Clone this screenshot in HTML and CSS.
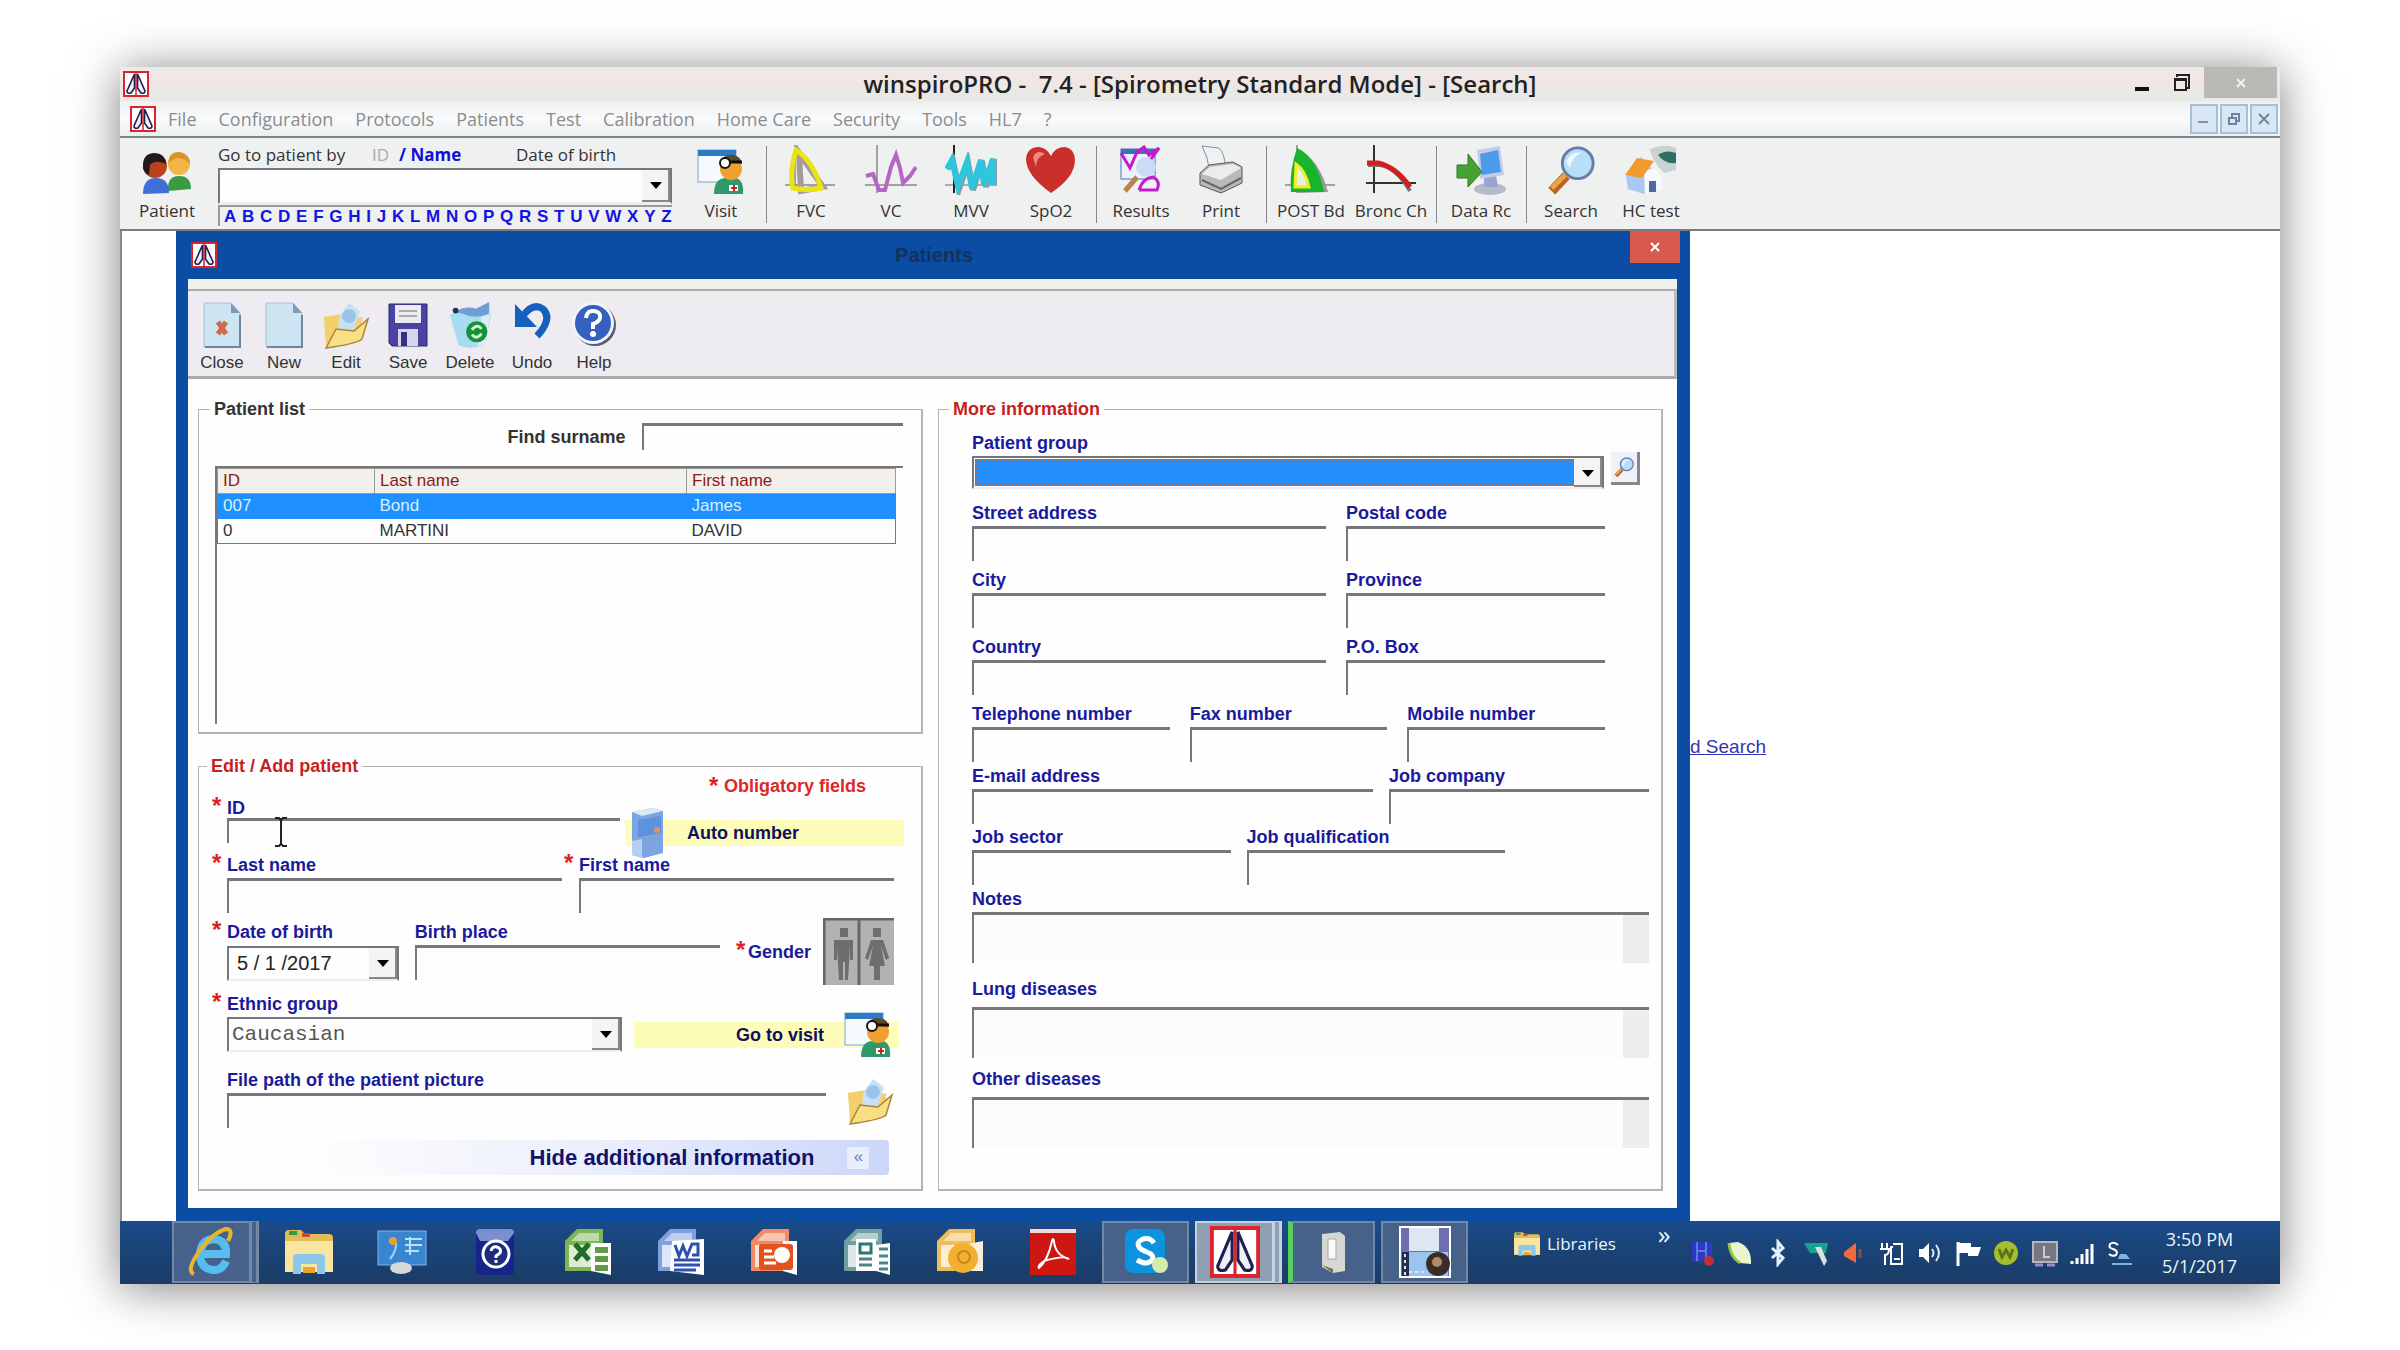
FILE: index.html
```html
<!DOCTYPE html>
<html lang="en">
<head>
    <meta charset="UTF-8">
    <meta name="viewport" content="width=device-width, initial-scale=1.0">
    <title>winspiroPRO - Search</title>
    <link rel="stylesheet" href="styles.css">
</head>
<body>
    <!-- shared icons -->
    <svg class="defs" aria-hidden="true">
        <symbol id="lungs" viewBox="0 0 26 26" preserveAspectRatio="none">
            <rect x="1" y="1" width="24" height="24" fill="#fff" stroke="#dc2430" stroke-width="2"/>
            <path d="M11.500 3 L4 20 Q4 23 8 22 L11.500 17 Z M14.500 3 L22 20 Q22 23 18 22 L14.500 17 Z" fill="#eef0f8" stroke="#1d2050" stroke-width="1.600"/>
            <path d="M13 2 V24" stroke="#dc2430" stroke-width="1.600"/>
        </symbol>
        <symbol id="visit" viewBox="0 0 48 46">
            <rect x="1" y="1" width="38" height="32" fill="#f6fafe" stroke="#7aa6cc"/>
            <rect x="1" y="1" width="38" height="6" fill="#2b7cc4"/>
            <path d="M17 45 Q17 29 29 29 L39 29 Q47 31 46 45 Z" fill="#2f9a68"/>
            <circle cx="34" cy="20" r="11" fill="#f0a030"/>
            <path d="M23 13 Q26 5 36 6 Q44 7 45 15 L36 13 Z" fill="#5b4a2c"/>
            <circle cx="28" cy="14" r="5" fill="#fff" stroke="#111" stroke-width="2"/>
            <path d="M33 13 H45" stroke="#111" stroke-width="3"/>
            <rect x="32" y="36" width="9" height="6" fill="#fff"/><path d="M34 39 h6 M37 36 v6" stroke="#c22" stroke-width="2"/>
        </symbol>
        <symbol id="folder" viewBox="0 0 48 48">
            <path d="M2 16 L20 13 L24 19 L40 16 L40 40 L4 47 Z" fill="#f3d06c"/>
            <path d="M17 16 L27 2 L38 10 L30 34 L16 34 Z" fill="#c7e0f5"/>
            <circle cx="27" cy="15" r="7" fill="#9cc4ea"/>
            <path d="M4 47 L14 28 L32 30 L46 18 L40 38 Q34 43 4 47 Z" fill="#f8df84" stroke="#a98538" stroke-width="1.500"/>
        </symbol>
        <symbol id="magnifier" viewBox="0 0 50 52">
            <path d="M20 32 L5 48" stroke="#b9641d" stroke-width="10"/>
            <path d="M19 31 L5 45" stroke="#f0a24a" stroke-width="5"/>
            <circle cx="32" cy="19" r="16" fill="#b9defa" stroke="#667ba8" stroke-width="3"/>
            <path d="M20 18 Q24 6 36 8 Q26 12 24 24 Z" fill="#eaf7ff"/>
        </symbol>
        <symbol id="explorer" viewBox="0 0 52 48">
            <path d="M2 6 Q2 2 6 2 H18 L22 6 H46 Q50 6 50 10 V44 H2 Z" fill="#e2bd55"/>
            <path d="M2 13 H50 V44 H2 Z" fill="#f8e5a0"/>
            <rect x="6" y="3" width="8" height="4" fill="#2f9c4c"/><rect x="19" y="5" width="8" height="4" fill="#d0483a"/>
            <path d="M10 46 V30 Q10 26 14 26 H38 Q42 26 42 30 V46 H34 V36 H18 V46 Z" fill="#8dc8ea"/>
            <rect x="20" y="39" width="12" height="6" fill="#e8a72c"/>
        </symbol>
        <symbol id="office-page" viewBox="0 0 50 50">
            <path d="M14 2 H40 L40 44 H2 V14 Z" fill="currentColor"/>
            <path d="M16 6 H36 V14 H8 Z" fill="#ffffff" opacity=".5"/>
            <path d="M6 18 H30 V40 H6 Z" fill="#ffffff" opacity=".75"/>
        </symbol>
    </svg>

    <div class="screen">
        <header class="titlebar">
            <svg class="app-icon"><use href="#lungs"/></svg>
            <h1>winspiroPRO -  7.4 - [Spirometry Standard Mode] - [Search]</h1>
            <div class="window-controls">
                <button aria-label="Minimize"><svg width="14" height="20"><rect y="14" width="14" height="4" fill="#111"/></svg></button>
                <button aria-label="Restore"><svg width="18" height="20" fill="none" stroke="#222" stroke-width="2"><path d="M4 4 V2 H16 V15 H14"/><path d="M2 6 H13 V17 H2 Z M2 7 H13"/></svg></button>
                <button class="close" aria-label="Close"><svg width="12" height="12" stroke="#f4f0ee" stroke-width="2"><path d="M2 2 L10 10 M10 2 L2 10"/></svg></button>
            </div>
        </header>

        <nav class="menubar">
            <svg class="app-icon"><use href="#lungs"/></svg>
            <a href="#">File</a>
            <a href="#">Configuration</a>
            <a href="#">Protocols</a>
            <a href="#">Patients</a>
            <a href="#">Test</a>
            <a href="#">Calibration</a>
            <a href="#">Home Care</a>
            <a href="#">Security</a>
            <a href="#">Tools</a>
            <a href="#">HL7</a>
            <a href="#">?</a>
            <div class="mdi-controls">
                <button aria-label="Minimize child"><svg width="12" height="12"><rect y="8" width="10" height="2" fill="#7c94ae"/></svg></button>
                <button aria-label="Restore child"><svg width="12" height="12" fill="none" stroke="#6c86a4" stroke-width="2"><path d="M4 4 V1 H11 V8 H8 M1 5 H8 V11 H1 Z"/></svg></button>
                <button aria-label="Close child"><svg width="12" height="12" stroke="#6c86a4" stroke-width="2"><path d="M1 1 L11 11 M11 1 L1 11"/></svg></button>
            </div>
        </nav>

        <div class="toolbar">
            <button class="tool patient">
                <svg width="50" height="46" viewBox="0 0 50 46">
                    <path d="M26 42 Q25 27 37 27 Q49 27 49 40 Z" fill="#3b9a45"/>
                    <circle cx="37" cy="15" r="11" fill="#f2b548"/><path d="M26 14 Q27 2 38 3 Q48 5 48 15 Q42 8 34 9 Z" fill="#dc9428"/>
                    <path d="M1 45 Q1 29 14 29 Q27 29 27 44 Z" fill="#3f6fd6"/>
                    <circle cx="13" cy="17" r="12" fill="#b8441e"/><path d="M1 19 Q0 4 13 4 Q24 5 24 15 Q14 10 8 16 L7 26 Q2 24 1 19 Z" fill="#241a1c"/>
                </svg>
                <span>Patient</span>
            </button>
            <div class="goto">
                <div class="goto-labels">
                    <label for="gotoPatient">Go to patient by</label>
                    <span class="muted">ID</span>
                    <a href="#">/ Name</a>
                    <span>Date of birth</span>
                </div>
                <div class="combo">
                    <input id="gotoPatient" type="text">
                </div>
                <div class="letters">
                    <a href="#">A</a><a href="#">B</a><a href="#">C</a><a href="#">D</a><a href="#">E</a><a href="#">F</a><a href="#">G</a><a href="#">H</a><a href="#">I</a><a href="#">J</a><a href="#">K</a><a href="#">L</a><a href="#">M</a><a href="#">N</a><a href="#">O</a><a href="#">P</a><a href="#">Q</a><a href="#">R</a><a href="#">S</a><a href="#">T</a><a href="#">U</a><a href="#">V</a><a href="#">W</a><a href="#">X</a><a href="#">Y</a><a href="#">Z</a>
                </div>
            </div>
            <div class="tool-group">
                <button class="tool"><svg width="48" height="46"><use href="#visit"/></svg><span>Visit</span></button>
            </div>
            <div class="tool-group">
                <button class="tool">
                    <svg width="52" height="50" viewBox="0 0 52 50" fill="none"><path d="M10 0 V46 M0 40 H50" stroke="#555"/><path d="M14 8 L38 42 L16 46 Z" stroke="#a89a9a" stroke-width="6"/><path d="M11 5 Q28 16 36 43 Q20 46 8 43 Q4 30 11 5 Z" stroke="#e9e414" stroke-width="5"/></svg>
                    <span>FVC</span>
                </button>
                <button class="tool">
                    <svg width="52" height="50" viewBox="0 0 52 50" fill="none"><path d="M12 0 V48 M0 40 H52" stroke="#555"/><path d="M1 31 L8 29 L14 45 L20 45 L26 22 L31 10 L35 23 L38 38 L45 31 L51 22" stroke="#b566c4" stroke-width="4"/></svg>
                    <span>VC</span>
                </button>
                <button class="tool">
                    <svg width="52" height="50" viewBox="0 0 52 50" fill="none"><path d="M0 40 H52" stroke="#666"/><path d="M9 0 V48" stroke="#222" stroke-width="2"/><path d="M2 24 L8 16 L14 44 L23 18 L28 45 L37 16 L41 42 L49 14 V40" stroke="#909aa0" stroke-width="6"/><path d="M2 24 L7 15 L13 41 L22 17 L27 43 L36 15 L39 40 L48 14 V40" stroke="#2cc6de" stroke-width="6"/></svg>
                    <span>MVV</span>
                </button>
                <button class="tool">
                    <svg width="52" height="50" viewBox="0 0 52 50"><path d="M26 48 Q1 30 1 14 Q2 2 14 2 Q22 3 26 11 Q30 2 40 2 Q50 4 50 15 Q50 32 26 48 Z" fill="#cb2f2b"/><path d="M8 12 Q12 4 20 9 Q11 12 11 22 Z" fill="#ef8a82"/></svg>
                    <span>SpO2</span>
                </button>
            </div>
            <div class="tool-group">
                <button class="tool">
                    <svg width="44" height="50" viewBox="0 0 44 50" fill="none"><rect x="2" y="4" width="34" height="30" fill="#eaf2fc" stroke="#4d6fb0"/><rect x="2" y="4" width="34" height="5" fill="#3f6fc0"/><circle cx="27" cy="22" r="10" fill="#c9dcf6"/><path d="M18 32 L6 46" stroke="#b7854c" stroke-width="5"/><path d="M2 8 L11 23 L18 7 L25 2 L30 10 L40 3 L32 14 M20 45 H38 Q42 36 34 32 Q24 33 20 45" stroke="#c717cf" stroke-width="3"/></svg>
                    <span>Results</span>
                </button>
                <button class="tool">
                    <svg width="48" height="50" viewBox="0 0 48 50"><path d="M5 1 L22 3 Q28 9 28 21 L12 23 Q11 12 5 1 Z" fill="#eef2f7" stroke="#8a8f96"/><path d="M3 28 L12 20 L36 17 L45 22 V38 L24 48 L3 40 Z" fill="#b9b9b9" stroke="#555"/><path d="M5 29 L24 35 L44 23 L36 19 L13 22 Z" fill="#ececec"/><path d="M5 35 L24 44 L44 33" fill="none" stroke="#666" stroke-width="2"/></svg>
                    <span>Print</span>
                </button>
            </div>
            <div class="tool-group">
                <button class="tool">
                    <svg width="52" height="50" viewBox="0 0 52 50"><path d="M12 0 V48 M0 40 H50" stroke="#555"/><path d="M13 4 Q34 14 43 47 L12 48 Z" fill="#999"/><path d="M12 3 Q32 12 39 47 H6 Q4 26 12 3 Z" fill="#17b52d"/><path d="M11 19 Q20 25 24 42 H10 Z" fill="#e6efe0" stroke="#f0ee22" stroke-width="3"/></svg>
                    <span>POST Bd</span>
                </button>
                <button class="tool">
                    <svg width="50" height="50" viewBox="0 0 50 50" fill="none"><path d="M8 0 V48 M0 38 H50" stroke="#333" stroke-width="2"/><path d="M2 20 H14 Q30 22 44 46" stroke="#777" stroke-width="4"/><path d="M1 18 H12 Q30 22 44 42" stroke="#cf1f20" stroke-width="5"/></svg>
                    <span>Bronc Ch</span>
                </button>
            </div>
            <div class="tool-group">
                <button class="tool">
                    <svg width="50" height="50" viewBox="0 0 50 50"><ellipse cx="34" cy="44" rx="16" ry="6" fill="#b4b9cc"/><path d="M28 30 L40 30 L42 42 L28 42 Z" fill="#9aa6d0"/><path d="M21 5 L44 1 L48 30 L24 34 Z" fill="#c4cce8"/><path d="M24 9 L42 5 L45 27 L26 30 Z" fill="#4c9bea"/><path d="M1 20 H12 V9 L26 27 L12 42 V33 H1 Z" fill="#45a233" stroke="#2d7a25"/></svg>
                    <span>Data Rc</span>
                </button>
            </div>
            <div class="tool-group">
                <button class="tool"><svg width="50" height="50"><use href="#magnifier"/></svg><span>Search</span></button>
                <button class="tool">
                    <svg width="54" height="50" viewBox="0 0 54 50"><path d="M26 4 Q40 -2 52 3 V25 L40 28 Q28 16 26 4 Z" fill="#c9d2d0"/><path d="M34 10 Q42 4 52 8 V18 Q42 20 34 10 Z" fill="#2f6f66"/><path d="M2 32 L17 12 L34 30 V44 L20 49 L4 44 Z" fill="#a9c9f2"/><path d="M20 26 L30 23 L38 32 V45 L21 49 Z" fill="#f5f8fc"/><path d="M1 30 L13 13 L30 16 L18 33 Z" fill="#f29a2e"/><rect x="25" y="36" width="7" height="11" fill="#4b68a8"/></svg>
                    <span>HC test</span>
                </button>
            </div>
        </div>

        <main class="workspace">
            <section class="dialog">
                <div class="dialog-title">
                    <svg class="app-icon"><use href="#lungs"/></svg>
                    <h2>Patients</h2>
                    <button class="dialog-close" aria-label="Close dialog"><svg width="12" height="12" stroke="#fff" stroke-width="2"><path d="M2 2 L10 10 M10 2 L2 10"/></svg></button>
                </div>

                <div class="dialog-body">
                    <div class="dialog-toolbar">
                        <button class="tool"><svg width="38" height="48" viewBox="0 0 38 48"><path d="M1 2 H28 L37 12 V46 H1 Z" fill="#cfe4f3" stroke="#a9c0d2"/><path d="M28 2 V12 H37 Z" fill="#7d9cb8"/><path d="M37 14 V46 H2" fill="none" stroke="#71889b" stroke-width="2"/><path d="M15 21 L23 33 M23 21 L15 33" stroke="#cc6a4a" stroke-width="5"/></svg><span>Close</span></button>
                        <button class="tool"><svg width="38" height="48" viewBox="0 0 38 48"><path d="M1 2 H28 L37 12 V46 H1 Z" fill="#cfe4f3" stroke="#a9c0d2"/><path d="M28 2 V12 H37 Z" fill="#7d9cb8"/><path d="M37 14 V46 H2" fill="none" stroke="#71889b" stroke-width="2"/></svg><span>New</span></button>
                        <button class="tool"><svg width="48" height="48"><use href="#folder"/></svg><span>Edit</span></button>
                        <button class="tool"><svg width="40" height="48" viewBox="0 0 40 48"><path d="M1 3 H39 V45 H4 L1 42 Z" fill="#4b43a4" stroke="#2d2870"/><rect x="7" y="4" width="26" height="18" fill="#eceaf2"/><path d="M11 10 H29 M11 15 H29" stroke="#aaa" stroke-width="2"/><path d="M10 28 H30 V45 H10 Z" fill="#d7d5e8"/><path d="M13 31 H19 V45 H13 Z" fill="#37308a"/></svg><span>Save</span></button>
                        <button class="tool"><svg width="48" height="48" viewBox="0 0 48 50"><path d="M3 14 Q24 6 46 14 L40 46 Q24 52 12 46 Z" fill="#a8dcf0"/><path d="M6 12 Q20 4 30 8 L44 1 V13 Q30 20 16 13 Z" fill="#6d9fd6"/><circle cx="9" cy="10" r="3" fill="#234"/><path d="M36 16 L45 14 L40 46 L32 48 Z" fill="#dcebf0"/><circle cx="31" cy="32" r="11" fill="#16923a"/><path d="M26 30 Q31 23 36 29 M36 34 Q31 41 26 35" fill="none" stroke="#d9f5d4" stroke-width="3"/></svg><span>Delete</span></button>
                        <button class="tool"><svg width="38" height="40" viewBox="0 0 38 40"><path d="M10 15 Q20 1 30 8 Q40 18 24 35" fill="none" stroke="#1660bd" stroke-width="7"/><path d="M2 3 V26 H24 Z" fill="#1660bd"/></svg><span>Undo</span></button>
                        <button class="tool"><svg width="46" height="46" viewBox="0 0 46 46"><circle cx="24" cy="24" r="21" fill="#555a78"/><circle cx="22" cy="22" r="21" fill="#f2f4fb"/><circle cx="22" cy="22" r="18" fill="#3560bd"/><path d="M15 17 Q16 9 23 10 Q30 11 29 17 Q28 21 22 23 V28" fill="none" stroke="#fff" stroke-width="4"/><circle cx="22" cy="33" r="3" fill="#fff"/></svg><span>Help</span></button>
                    </div>

                    <div class="panels">
                        <div class="left-panel">
                            <fieldset class="patient-list">
                                <legend>Patient list</legend>
                                <div class="find">
                                    <label for="findSurname">Find surname</label>
                                    <input id="findSurname" type="text">
                                </div>
                                <div class="listbox">
                                    <table>
                                        <thead>
                                            <tr><th class="col-id">ID</th><th class="col-last">Last name</th><th>First name</th></tr>
                                        </thead>
                                        <tbody>
                                            <tr class="selected"><td>007</td><td>Bond</td><td>James</td></tr>
                                            <tr><td>0</td><td>MARTINI</td><td>DAVID</td></tr>
                                        </tbody>
                                    </table>
                                </div>
                            </fieldset>

                            <fieldset class="edit-patient">
                                <legend class="red">Edit / Add patient</legend>
                                <p class="obligatory"><span class="star">*</span>Obligatory fields</p>
                                <div class="row row-id">
                                    <div class="field starred">
                                        <span class="star">*</span>
                                        <label for="patientId">ID</label>
                                        <input id="patientId" type="text">
                                        <svg class="ibeam" width="14" height="30" fill="none" stroke="#222" stroke-width="2"><path d="M1 1 H5 L7 3 L9 1 H13 M7 3 V27 M1 29 H5 L7 27 L9 29 H13"/></svg>
                                    </div>
                                    <button class="action auto-number">
                                        <svg width="34" height="52" viewBox="0 0 34 52"><path d="M2 5 L22 1 L33 4 V46 L14 51 L2 48 Z" fill="#7ba4e0"/><path d="M2 5 L22 1 L33 4 L12 9 Z" fill="#dbe9f5"/><path d="M8 13 L31 9 V26 L8 30 Z" fill="#5d92de"/><path d="M2 34 L12 32 V51 L2 48 Z" fill="#b8cef0"/><circle cx="27" cy="23" r="3" fill="#dc9468"/></svg>
                                        <span>Auto number</span>
                                    </button>
                                </div>
                                <div class="row row-name">
                                    <div class="field starred">
                                        <span class="star">*</span>
                                        <label for="lastName">Last name</label>
                                        <input id="lastName" type="text">
                                    </div>
                                    <div class="field starred">
                                        <span class="star">*</span>
                                        <label for="firstName">First name</label>
                                        <input id="firstName" type="text">
                                    </div>
                                </div>
                                <div class="row row-birth">
                                    <div class="field starred">
                                        <span class="star">*</span>
                                        <label for="birthDate">Date of birth</label>
                                        <div class="combo"><input id="birthDate" type="text" value="5 / 1 /2017"></div>
                                    </div>
                                    <div class="field">
                                        <label for="birthPlace">Birth place</label>
                                        <input id="birthPlace" type="text">
                                    </div>
                                    <div class="gender">
                                        <span class="star">*</span>
                                        <span class="gender-label">Gender</span>
                                        <button aria-label="Choose gender">
                                            <svg width="71" height="67" viewBox="0 0 71 67"><rect width="71" height="67" fill="#b2b2b2"/><path d="M36 0 V67 M1 67 V1 H71" stroke="#666" stroke-width="3" fill="none"/><g fill="#6e6e6e"><rect x="17" y="10" width="8" height="9"/><path d="M11 22 H30 V42 H27 V28 L25 62 H22 V44 H20 V62 H16 L14 28 V42 H11 Z"/><rect x="50" y="10" width="8" height="9"/><path d="M48 22 H60 L66 40 L63 42 L58 28 L62 48 H57 V62 H51 V48 H46 L50 28 L45 42 L42 40 Z"/></g></svg>
                                        </button>
                                    </div>
                                </div>
                                <div class="row row-ethnic">
                                    <div class="field starred">
                                        <span class="star">*</span>
                                        <label for="ethnic">Ethnic group</label>
                                        <div class="combo">
                                            <select id="ethnic"><option>Caucasian</option></select>
                                        </div>
                                    </div>
                                    <button class="action goto-visit">
                                        <span>Go to visit</span>
                                        <svg width="48" height="46"><use href="#visit"/></svg>
                                    </button>
                                </div>
                                <div class="row row-path">
                                    <div class="field starred">
                                        <label for="picturePath">File path of the patient picture</label>
                                        <input id="picturePath" type="text">
                                    </div>
                                    <button class="browse" aria-label="Browse"><svg width="48" height="50"><use href="#folder"/></svg></button>
                                </div>
                                <button class="hide-info">
                                    <span>Hide additional information</span>
                                    <i>«</i>
                                </button>
                            </fieldset>
                        </div>

                        <fieldset class="more-info">
                            <legend class="red">More information</legend>
                            <div class="row row-group">
                                <div class="field">
                                    <label for="patientGroup">Patient group</label>
                                    <div class="combo highlighted">
                                        <select id="patientGroup"><option></option></select>
                                    </div>
                                </div>
                                <button class="group-search" aria-label="Search group"><svg width="20" height="22"><use href="#magnifier"/></svg></button>
                            </div>
                            <div class="row row-address">
                                <div class="field"><label for="street">Street address</label><input id="street" type="text"></div>
                                <div class="field"><label for="postal">Postal code</label><input id="postal" type="text"></div>
                            </div>
                            <div class="row row-address">
                                <div class="field"><label for="city">City</label><input id="city" type="text"></div>
                                <div class="field"><label for="province">Province</label><input id="province" type="text"></div>
                            </div>
                            <div class="row row-address">
                                <div class="field"><label for="country">Country</label><input id="country" type="text"></div>
                                <div class="field"><label for="pobox">P.O. Box</label><input id="pobox" type="text"></div>
                            </div>
                            <div class="row row-phone">
                                <div class="field"><label for="telephone">Telephone number</label><input id="telephone" type="text"></div>
                                <div class="field"><label for="fax">Fax number</label><input id="fax" type="text"></div>
                                <div class="field"><label for="mobile">Mobile number</label><input id="mobile" type="text"></div>
                            </div>
                            <div class="row row-mail">
                                <div class="field"><label for="email">E-mail address</label><input id="email" type="text"></div>
                                <div class="field"><label for="company">Job company</label><input id="company" type="text"></div>
                            </div>
                            <div class="row row-job">
                                <div class="field"><label for="sector">Job sector</label><input id="sector" type="text"></div>
                                <div class="field"><label for="qualification">Job qualification</label><input id="qualification" type="text"></div>
                            </div>
                            <div class="field memo notes"><label for="notes">Notes</label><textarea id="notes"></textarea></div>
                            <div class="field memo"><label for="lung">Lung diseases</label><textarea id="lung"></textarea></div>
                            <div class="field memo"><label for="other">Other diseases</label><textarea id="other"></textarea></div>
                        </fieldset>
                    </div>
                </div>
            </section>
            <a class="search-link" href="#">d Search</a>
        </main>

        <footer class="taskbar">
            <div class="tasks">
                <button class="task open stacked" aria-label="Internet Explorer"><svg width="48" height="50" viewBox="0 0 48 50" fill="none"><path d="M38 34 Q34 44 24 43 Q12 41 12 27 Q13 13 25 12 Q39 13 38 27 H13" stroke="#55bdf0" stroke-width="8"/><path d="M6 47 Q-2 44 10 26 Q24 6 38 2 Q46 2 40 14" stroke="#eab52c" stroke-width="4"/></svg></button>
                <button class="task" aria-label="File Explorer"><svg width="52" height="48"><use href="#explorer"/></svg></button>
                <button class="task" aria-label="Control Panel"><svg width="50" height="46" viewBox="0 0 50 46"><rect x="1" y="2" width="48" height="34" fill="#3886cf" stroke="#7cb6ea"/><path d="M12 12 Q20 8 19 17 Q18 24 13 30" fill="none" stroke="#9bd0fa" stroke-width="2"/><circle cx="16" cy="12" r="4" fill="#ef9a37"/><path d="M28 10 H45 M28 16 H45 M28 22 H42 M33 8 V26" stroke="#bde0fb" stroke-width="2"/><ellipse cx="24" cy="39" rx="11" ry="6" fill="#d6d8da"/></svg></button>
                <button class="task" aria-label="Help"><svg width="42" height="50" viewBox="0 0 42 50"><rect x="2" y="2" width="38" height="46" rx="4" fill="#16258a"/><path d="M2 6 Q2 2 6 2 H36 Q40 2 40 6 L34 14 H6 Z" fill="#7b8ed2"/><circle cx="22" cy="27" r="13" fill="#1d2b80" stroke="#fff" stroke-width="3"/><path d="M17 24 Q18 19 23 20 Q28 22 26 26 L22 29 V31 M22 33 V36" fill="none" stroke="#fff" stroke-width="3"/></svg></button>
                <button class="task" aria-label="Excel"><svg width="50" height="50" viewBox="0 0 50 50"><g color="#7cb554"><use href="#office-page"/></g><path d="M28 16 H48 V48 L28 44 Z" fill="#fff"/><path d="M32 20 H45 V26 H32 Z M32 29 H45 V35 H32 Z M32 38 H45 V44 H32 Z" fill="#5f9c4a"/><path d="M12 17 L26 33 M26 17 L12 33" stroke="#1f6d2b" stroke-width="5"/></svg></button>
                <button class="task" aria-label="Word"><svg width="50" height="50" viewBox="0 0 50 50"><g color="#7f9fe0"><use href="#office-page"/></g><path d="M16 14 L48 12 V48 L14 44 Z" fill="#fff"/><path d="M19 18 L23 29 L27 19 L31 29 L36 17 H42 V28 H36" fill="none" stroke="#2d4fb0" stroke-width="3"/><path d="M18 33 H44 M18 38 H44 M18 43 H40" stroke="#2d4fb0" stroke-width="3"/></svg></button>
                <button class="task" aria-label="PowerPoint"><svg width="50" height="50" viewBox="0 0 50 50"><g color="#f08b66"><use href="#office-page"/></g><path d="M34 14 H48 V48 L34 44 Z" fill="#fff"/><rect x="10" y="17" width="34" height="26" rx="3" fill="#e2521f"/><circle cx="33" cy="28" r="8" fill="#fff"/><path d="M15 24 H23 M15 30 H25 M15 36 H27" stroke="#fff" stroke-width="3"/></svg></button>
                <button class="task" aria-label="Publisher"><svg width="50" height="50" viewBox="0 0 50 50"><g color="#6f9fa2"><use href="#office-page"/></g><path d="M14 12 H34 V44 H14 Z M34 18 L48 16 V48 L34 44 Z" fill="#fff"/><path d="M18 17 H29 V26 H18 Z" fill="none" stroke="#2d7778" stroke-width="3"/><path d="M17 32 H30 M17 38 H30 M37 22 H46 M37 29 H46 M37 36 H46 M37 42 H46" stroke="#4c8588" stroke-width="3"/></svg></button>
                <button class="task" aria-label="Outlook"><svg width="50" height="50" viewBox="0 0 50 50"><g color="#efbd5a"><use href="#office-page"/></g><path d="M28 18 L48 14 V44 H28 Z" fill="#f6efdd"/><circle cx="28" cy="31" r="15" fill="#f1b12f"/><circle cx="29" cy="30" r="6" fill="none" stroke="#c9851a" stroke-width="2"/></svg></button>
                <button class="task" aria-label="Adobe Reader"><svg width="46" height="46" viewBox="0 0 46 46"><rect width="46" height="46" fill="#cf1712"/><rect width="46" height="4" fill="#f3dcd8"/><path d="M9 39 Q18 31 22 12 Q23 8 24 12 Q25 26 39 30 Q34 26 14 32 Q7 37 9 39 Z" fill="none" stroke="#fff" stroke-width="2"/></svg></button>
                <button class="task open" aria-label="Skype"><svg width="48" height="50" viewBox="0 0 48 50"><rect x="3" y="2" width="40" height="44" rx="8" fill="#0c93dd"/><path d="M32 16 Q28 10 21 12 Q14 15 17 20 Q19 23 25 25 Q33 28 30 33 Q25 39 15 33" fill="none" stroke="#fff" stroke-width="5"/><circle cx="38" cy="38" r="8" fill="#d5ecad"/></svg></button>
                <button class="task open active stacked" aria-label="winspiroPRO"><svg width="50" height="52"><use href="#lungs"/></svg></button>
                <button class="task open progress" aria-label="Device"><svg width="28" height="46" viewBox="0 0 28 46"><path d="M3 5 L21 3 L26 7 V42 L14 44 L3 38 Z" fill="#d6d6d2"/><path d="M9 10 H17 V30 H9 Z" fill="#f8f8f8" stroke="#aaa"/><path d="M3 36 L14 40 V44 Z" fill="#7c6650"/></svg></button>
                <button class="task open" aria-label="Recorder"><svg width="52" height="52" viewBox="0 0 52 52"><rect x="1" y="1" width="50" height="50" fill="#6d6fae" stroke="#fff" stroke-width="2"/><path d="M10 2 H40 V25 H10 Z" fill="#dfe7f5"/><path d="M3 26 H49 V50 H3 Z" fill="#9dc4f0"/><path d="M3 26 H10 V50 H3 Z" fill="#20304c"/><path d="M6 28 V50 M10 46 H28" stroke="#dfe7f5" stroke-width="2" stroke-dasharray="3 3"/><circle cx="39" cy="38" r="12" fill="#3a2d28"/><circle cx="38" cy="36" r="5" fill="#b08a60"/></svg></button>
            </div>
            <a class="libraries" href="#"><svg width="28" height="26"><use href="#explorer"/></svg>Libraries</a>
            <span class="chevron">»</span>
            <div class="tray">
                <svg viewBox="0 0 28 28"><rect x="4" y="3" width="20" height="20" fill="#2a3bc0"/><path d="M9 3 V22 M18 3 V22 M9 12 H18" stroke="#5f78e0" stroke-width="2"/><circle cx="21" cy="22" r="5" fill="#c23030"/></svg>
                <svg viewBox="0 0 28 28"><path d="M3 4 L12 3 Q26 8 25 25 L14 24 Q4 18 3 4 Z" fill="#eaf6cf"/><path d="M3 4 Q4 18 14 24" fill="none" stroke="#93c840" stroke-width="3"/></svg>
                <svg viewBox="0 0 28 28"><path d="M8 9 L19 19 L14 25 V3 L19 9 L8 19" fill="none" stroke="#e6f1fa" stroke-width="3"/></svg>
                <svg viewBox="0 0 28 28"><path d="M2 4 H26 L24 14 H8 Z" fill="#19a08e"/><path d="M13 8 L22 27 L25 22 L19 8 Z" fill="#dadfe2"/></svg>
                <svg viewBox="0 0 28 28"><path d="M4 13 L16 4 V24 L4 17 Z" fill="#ef6a3c"/><path d="M20 10 V19" stroke="#a34534" stroke-width="3"/></svg>
                <svg viewBox="0 0 28 28" fill="none" stroke="#fff" stroke-width="2"><path d="M15 5 H24 V25 H13 V8 H15 M16 20 H22"/><path d="M4 4 V9 M9 4 V9 M2 10 H11 Q11 16 7 16 V26"/></svg>
                <svg viewBox="0 0 28 28"><path d="M3 10 H7 L13 4 V24 L7 18 H3 Z" fill="#fff"/><path d="M16 10 Q19 14 16 18 M20 6 Q26 14 20 22" fill="none" stroke="#e0e8f0" stroke-width="2"/></svg>
                <svg viewBox="0 0 28 28"><path d="M4 3 V27" stroke="#fff" stroke-width="3"/><path d="M5 4 H17 V8 H27 L24 17 H14 V14 H5 Z" fill="#fff"/></svg>
                <svg viewBox="0 0 28 28"><circle cx="14" cy="14" r="12" fill="#a4bf2e"/><path d="M7 10 L10 18 L14 11 L18 18 L21 10" fill="none" stroke="#5d7414" stroke-width="3"/></svg>
                <svg viewBox="0 0 28 28"><rect x="3" y="3" width="24" height="20" fill="#77787f" stroke="#b4b6bd" stroke-width="2"/><path d="M14 7 V18 H20" fill="none" stroke="#c9cad2" stroke-width="2"/><path d="M5 26 H13 M17 26 H25" stroke="#8f8fd0" stroke-width="3"/></svg>
                <svg viewBox="0 0 28 28"><path d="M4 25 V22 M9 25 V19 M14 25 V15 M19 25 V10 M24 25 V5" stroke="#fff" stroke-width="3"/></svg>
                <svg viewBox="0 0 28 28"><path d="M12 6 Q8 2 4 5 Q2 9 7 10 Q13 12 10 16 Q6 18 3 15" fill="none" stroke="#fff" stroke-width="2"/><path d="M12 20 L14 15 H20 L24 20 Z" fill="#7fb2dc"/><path d="M6 25 H26" stroke="#7fb2dc" stroke-width="2"/></svg>
            </div>
            <div class="clock">
                <span>3:50 PM</span>
                <span>5/1/2017</span>
            </div>
        </footer>
    </div>
</body>
</html>
```
FILE: styles.css
```css
* { margin: 0; padding: 0; box-sizing: border-box; }
body { font-family: "Open Sans", "Noto Sans", sans-serif; font-size: 18px; background: #fff; }
button { border: none; background: none; font: inherit; color: inherit; cursor: pointer; }
a { color: inherit; text-decoration: none; }
svg { display: block; flex: none; }
.defs { position: absolute; width: 0; height: 0; }

.screen { width: 90%; margin: 67px auto; background: #fff; box-shadow: 0 4px 44px rgba(0, 0, 0, 0.5); }
.app-icon { width: 26px; height: 26px; }

/* Main window frame */
.titlebar { display: grid; grid-template-columns: 1fr auto 1fr; align-items: center; height: 34px; padding: 0 3px; background: linear-gradient(#ebebe9, #f2e6e4 40%, #e8e8e4 70%); }
.titlebar h1 { font-size: 24px; font-weight: 600; line-height: 34px; color: #222; white-space: pre; }
.window-controls { display: flex; justify-content: flex-end; align-self: start; align-items: center; }
.window-controls button { display: grid; place-items: center; width: 40px; height: 31px; }
.window-controls .close { width: 73px; margin-left: 2px; background: #bab9b5; }

.menubar { display: flex; align-items: center; gap: 22px; height: 37px; padding-left: 10px; border-bottom: 2px solid #808485; background: linear-gradient(#eef0f0, #f8fafb 50%, #eceff0); color: #8c8c8c; font-size: 18px; }
.menubar .app-icon { margin-right: -10px; }
.mdi-controls { display: flex; gap: 2px; margin-left: auto; padding-right: 2px; }
.mdi-controls button { display: grid; place-items: center; width: 28px; height: 30px; background: #d9e7f5; border: 2px solid #a5bfd6; }

/* Main toolbar */
.toolbar { display: flex; height: 93px; padding: 8px 0 6px 2px; border-bottom: 2px solid #7a7d7d; background: #eff0f0; color: #333; font-size: 17px; }
.tool { display: flex; flex-direction: column; align-items: center; justify-content: flex-end; width: 80px; line-height: 24px; white-space: nowrap; }
.toolbar .tool span { margin-top: 4px; }
.toolbar .tool.patient { width: 90px; }
.goto { width: 454px; margin: 0 4px 0 6px; }
.goto-labels { display: flex; height: 22px; line-height: 18px; }
.goto-labels label { width: 154px; }
.goto-labels .muted { width: 27px; color: #aaa; }
.goto-labels a { width: 117px; color: #1010d8; font-weight: 700; }
.goto .combo { height: 36px; border-width: 2px; }
.letters { display: flex; justify-content: space-between; margin-top: 1px; padding-left: 4px; border-top: 2px solid #999; border-left: 2px solid #999; color: #1414e0; font: bold 17px/19px "Liberation Sans", sans-serif; }
.tool-group { display: flex; padding: 0 5px; }
.tool-group + .tool-group { border-left: 1px solid #888; padding-left: 4px; }

/* Sunken boxes */
input, select, textarea { width: 100%; height: 35px; border: solid #74787a; border-width: 3px 0 0 2px; background: #fdfdfd; font: 20px "Liberation Sans", sans-serif; color: #222; border-radius: 0; outline: none; appearance: none; }
textarea { display: block; height: 51px; resize: none; background: linear-gradient(to left, #ededed 26px, #fcfcfc 26px); }
.combo { position: relative; height: 35px; border: 2px solid #74787a; border-bottom-color: #eee; background: #fff; }
.combo input, .combo select { height: 100%; border: none; }
.combo::before { content: ""; position: absolute; top: 0; right: 0; bottom: 0; width: 26px; background: #f4f4f4; border-right: 2px solid #888; border-bottom: 2px solid #888; }
.combo::after { content: ""; position: absolute; top: 12px; right: 8px; border: solid transparent; border-width: 7px 6px 0; border-top-color: #000; }

/* Patient dialog */
.workspace { display: grid; grid-template-columns: 54fr 1514fr 590fr; border-left: 2px solid #888; background: #fff; }
.dialog { grid-column: 2; padding: 0 13px 13px 12px; background: #0b4da2; font-family: "Liberation Sans", sans-serif; font-size: 17px; }
.dialog-title { display: grid; grid-template-columns: 1fr auto 1fr; align-items: center; height: 48px; padding-left: 3px; }
.dialog-title h2 { font-size: 20px; color: #12335f; }
.dialog-close { display: grid; place-items: center; align-self: start; justify-self: end; width: 50px; height: 32px; margin-right: -3px; background: #d85a4e; }
.dialog-body { background: #fefefe; border-top: 10px solid #eef1ea; }
.dialog-toolbar { display: flex; height: 90px; padding: 0 0 2px 3px; border-top: 2px solid #aaa; border-bottom: 3px solid #aaa; border-right: 3px solid #bbb; background: #eeecf0; color: #333; }
.dialog-toolbar .tool { width: 62px; justify-content: space-between; padding-top: 10px; line-height: 22px; }
.panels { display: grid; grid-template-columns: 1fr 1fr; gap: 15px; padding: 18px 14px 17px 10px; font-size: 18px; }

fieldset { min-width: 0; border: 2px solid #b4b4b4; border-width: 1px 2px 2px 1px; }
legend { margin-left: -5px; padding: 0 4px; line-height: 24px; font-weight: 700; color: #333; }
legend.red { color: #c81e1e; }
.panels label, .gender-label { display: block; line-height: 20px; font-weight: 700; color: #1a1a9c; white-space: nowrap; }
.patient-list { padding: 2px 18px 8px 16px; }
.find { display: flex; align-items: center; justify-content: flex-end; gap: 16px; margin-bottom: 16px; }
.find label { color: #333; }
.find input { width: 38%; height: 27px; }
.listbox { height: 258px; padding-right: 7px; border: solid #777; border-width: 2px 0 0 2px; }
table { width: 100%; border-collapse: collapse; table-layout: fixed; border: 1px solid #777; font-size: 17px; }
th, td { height: 25px; padding-left: 5px; text-align: left; font-weight: 400; color: #333; }
th { border: 1px solid #999; background: #f3f0ec; color: #8c1a1a; }
.col-id { width: 157px; }
.col-last { width: 312px; }
.selected td { background: #1e90ff; color: #d6f0ff; }

.edit-patient { margin-top: 20px; padding: 0 17px 14px 13px; }
.star { width: 15px; height: 20px; line-height: 16px; font-size: 24px; font-weight: 700; color: #e02020; }
.obligatory { display: flex; justify-content: flex-end; height: 16px; margin: 0 38px 4px 0; line-height: 16px; font-weight: 700; color: #dc2828; }
.row { display: grid; margin-bottom: 9px; }
.field label { margin-bottom: 3px; }
.field > input { display: block; }
.starred { display: grid; grid-template-columns: 15px 1fr; }
.starred label, .starred > input, .starred .combo { grid-column: 2; }
.row-id { grid-template-columns: 408fr 279fr; column-gap: 5px; height: 57px; margin-bottom: 0; }
.row-id .field { position: relative; align-content: start; }
.row-id .field label { margin-bottom: 0; }
.row-id .field input { height: 25px; }
.ibeam { position: absolute; left: 62px; top: 19px; }
.action { display: flex; align-items: center; height: 26px; background: #fdfcb8; color: #10105c; font-weight: 700; white-space: nowrap; }
.action svg { margin: -14px 0; }
.auto-number { gap: 23px; margin-top: 22px; padding-left: 5px; }
.row-name { grid-template-columns: 350fr 330fr; column-gap: 2px; padding-right: 10px; }
.row-birth { grid-template-columns: 188fr 307fr 155fr; column-gap: 16px; margin-bottom: 13px; padding-right: 10px; }
.row-birth .combo input { padding-left: 8px; }
.gender { display: flex; align-items: center; justify-content: flex-end; }
.gender .star { width: 12px; }
.gender-label { margin-right: 12px; }
.gender button { margin: -4px 0; }
.row-ethnic { grid-template-columns: 409fr 265fr; column-gap: 12px; margin-bottom: 18px; padding-right: 5px; }
.row-ethnic select { padding-left: 3px; font: 21px "Liberation Mono", monospace; color: #555; }
.goto-visit { justify-content: flex-end; gap: 20px; margin-top: 28px; padding-right: 7px; }
.row-path { grid-template-columns: 614fr 48fr; column-gap: 20px; margin-bottom: 12px; padding-right: 10px; }
.browse { margin: 6px 0 0; height: 50px; }
.hide-info { display: flex; align-items: center; justify-content: flex-end; gap: 33px; width: 95%; height: 35px; margin-left: 20px; padding-right: 20px; border-radius: 4px; background: linear-gradient(to right, #fefefe 10%, #eef1fc 50%, #ccd6f8); color: #12126c; font-size: 22px; font-weight: 700; white-space: nowrap; }
.hide-info i { width: 22px; height: 22px; background: #e8eefc; color: #6a7cc8; font-size: 17px; font-style: normal; font-weight: 400; line-height: 20px; }

.more-info { padding: 12px 12px 0 33px; }
.more-info legend { margin-left: -23px; }
.more-info .row { column-gap: 20px; padding-right: 44px; }
.more-info .row-group { grid-template-columns: 632fr 29fr; column-gap: 7px; margin-bottom: 14px; padding-right: 9px; }
.row-group .combo { height: 33px; }
.highlighted select { width: calc(100% - 26px); margin: 1px; height: 27px; background: #2490fd; border: 2px dotted #a8674a; }
.group-search { display: grid; place-items: center; height: 33px; margin-top: 19px; border: solid #888; border-width: 0 3px 3px 0; background: #eff1f8; }
.row-address { grid-template-columns: 354fr 259fr; }
.more-info .row-phone { grid-template-columns: 1fr 1fr 1fr; margin-bottom: 4px; }
.more-info .row-mail { grid-template-columns: 401fr 260fr; column-gap: 16px; margin-bottom: 3px; padding-right: 0; }
.more-info .row-job { grid-template-columns: 259fr 259fr; column-gap: 16px; margin-bottom: 4px; padding-right: 144px; }
.memo { margin-bottom: 11px; }
.memo label { margin-bottom: 8px; }
.notes { margin-bottom: 16px; }
.notes label { margin-bottom: 3px; }

.search-link { justify-self: start; margin-top: 501px; color: #3434b0; font: 19px/30px "Liberation Sans", sans-serif; text-decoration: underline; }

/* Windows taskbar */
.taskbar { display: flex; height: 63px; padding-left: 52px; background: linear-gradient(#1a4c8c, #1a4478 40%, #1b3c66); color: #eef4fa; }
.tasks { display: flex; gap: 6px; }
.task { display: grid; place-items: center; width: 87px; height: 62px; }
.open { border: 2px solid #7488a6; background: #46618a; }
.stacked { border-right: 10px double #7488a6; }
.active { border-color: #c8d2de; background: #8f9fb4; }
.progress { border-left: 5px solid #55d05a; }
.libraries { display: flex; gap: 6px; align-self: start; margin: 10px 0 0 45px; line-height: 26px; font-size: 17px; }
.chevron { margin-left: 42px; font-size: 26px; line-height: 26px; }
.tray { display: flex; gap: 10px; align-items: center; margin-left: auto; }
.tray svg { width: 28px; height: 28px; }
.clock { display: flex; flex-direction: column; justify-content: center; margin: 0 43px 0 28px; line-height: 27px; font-size: 18px; text-align: center; }
```
